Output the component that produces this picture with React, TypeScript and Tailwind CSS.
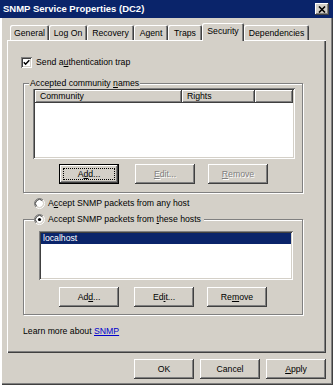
import type { ReactNode } from "react";

const raised =
  "shadow-[inset_-1px_-1px_0_#404040,inset_1px_1px_0_#ffffff,inset_-2px_-2px_0_#808080,inset_2px_2px_0_#d4d0c8]";
const defaultBtn =
  "shadow-[inset_0_0_0_1px_#000000,inset_-2px_-2px_0_#404040,inset_2px_2px_0_#ffffff,inset_-3px_-3px_0_#808080]";
const sunken =
  "shadow-[inset_1px_1px_0_#808080,inset_-1px_-1px_0_#ffffff,inset_2px_2px_0_#404040,inset_-2px_-2px_0_#d4d0c8]";
const etched = "border border-[#808080] shadow-[inset_1px_1px_0_#ffffff,1px_1px_0_#ffffff]";

function Btn({
  children,
  disabled,
  focused,
  className = "",
}: {
  children: ReactNode;
  disabled?: boolean;
  focused?: boolean;
  className?: string;
}) {
  return (
    <div
      className={`relative flex h-[20px] w-[60px] shrink-0 items-center justify-center bg-[#d4d0c8] ${
        focused ? defaultBtn : raised
      } ${disabled ? "text-[#808080] [text-shadow:1px_1px_0_#ffffff]" : "text-black"} ${className}`}
    >
      {focused && <div className="absolute inset-[4px] border border-dotted border-black" />}
      <span className="leading-[11px]">{children}</span>
    </div>
  );
}

function Radio({ checked }: { checked?: boolean }) {
  return (
    <svg width="11" height="11" viewBox="0 0 11 11" className="shrink-0">
      <circle cx="5.5" cy="5.5" r="4" fill="#ffffff" />
      <path d="M1.96 9.04 A5 5 0 0 1 9.04 1.96" fill="none" stroke="#808080" />
      <path d="M9.04 1.96 A5 5 0 0 1 1.96 9.04" fill="none" stroke="#ffffff" />
      <path d="M2.67 8.33 A4 4 0 0 1 8.33 2.67" fill="none" stroke="#404040" />
      <path d="M8.33 2.67 A4 4 0 0 1 2.67 8.33" fill="none" stroke="#d4d0c8" />
      {checked && <circle cx="5.5" cy="5.5" r="1.6" fill="#000000" />}
    </svg>
  );
}

const tabs = [
  { label: "General", w: "w-[39px]" },
  { label: "Log On", w: "w-[38px]" },
  { label: "Recovery", w: "w-[47px]" },
  { label: "Agent", w: "w-[34px]" },
  { label: "Traps", w: "w-[34px]" },
  { label: "Security", w: "w-[42px]", active: true },
  { label: "Dependencies", w: "w-[65px]" },
];

export default function App() {
  return (
    <div className="flex h-[385px] w-[333px] flex-col bg-[#d4d0c8] font-['Liberation_Sans',Arial,sans-serif] text-[8.7px] text-black">
      {/* title bar */}
      <div className="flex h-[18px] shrink-0 items-center justify-between bg-[#0a246a] pl-[3px] pr-[4px]">
        <span className="text-[9.5px] font-bold leading-[12px] text-white">SNMP Service Properties (DC2)</span>
        <div className={`flex h-[12px] w-[14px] items-center justify-center bg-[#d4d0c8] ${raised}`}>
          <svg width="8" height="7" viewBox="0 0 8 7">
            <path d="M1 0.5 L7 6.5 M7 0.5 L1 6.5" stroke="#000000" strokeWidth="1.6" />
          </svg>
        </div>
      </div>

      {/* body */}
      <div className="flex flex-1 flex-col px-[7px] pt-[5px] shadow-[inset_2px_0_0_#ffffff,inset_-1px_-1px_0_#404040,inset_-2px_-2px_0_#808080]">
        {/* tabs */}
        <div className="flex h-[17px] items-end pl-[3px]">
          {tabs.map((t) =>
            t.active ? (
              <div
                key={t.label}
                className={`relative z-10 -mb-[1px] flex h-[18px] ${t.w} items-start justify-center rounded-t-[2px] bg-[#d4d0c8] pt-[3px] leading-[11px] shadow-[inset_1px_1px_0_#ffffff,inset_-1px_0_0_#404040,inset_-2px_0_0_#808080]`}
              >
                {t.label}
              </div>
            ) : (
              <div
                key={t.label}
                className={`flex h-[15px] ${t.w} items-start justify-center rounded-t-[2px] pt-[3px] leading-[11px] shadow-[inset_1px_1px_0_#ffffff,inset_-1px_0_0_#404040,inset_-2px_0_0_#808080]`}
              >
                {t.label}
              </div>
            ),
          )}
        </div>

        {/* tab panel */}
        <div className="flex h-[313px] flex-col shadow-[inset_1px_1px_0_#ffffff,inset_-1px_-1px_0_#404040,inset_-2px_-2px_0_#808080]">
          <div className="ml-[14px] mt-[17px] flex h-[11px] items-center gap-[4px]">
            <div className={`flex h-[11px] w-[11px] items-center justify-center bg-white ${sunken}`}>
              <svg width="7" height="7" viewBox="0 0 7 7">
                <path d="M0.8 3.2 L2.6 5.2 L6.3 1.2" fill="none" stroke="#000000" strokeWidth="1.5" />
              </svg>
            </div>
            <span className="leading-[11px]">
              Send a<u>u</u>thentication trap
            </span>
          </div>

          {/* accepted community names */}
          <div className={`relative ml-[16px] mt-[15px] h-[110px] w-[280px] ${etched}`}>
            <span className="absolute -top-[7px] left-[5px] bg-[#d4d0c8] px-[1px] leading-[12px]">
              Accepted community <u>n</u>ames
            </span>
            <div className={`ml-[9px] mt-[4px] flex h-[71px] w-[262px] flex-col bg-white p-[2px] ${sunken}`}>
              <div className="flex h-[13px] bg-[#d4d0c8]">
                <div className={`flex w-[147px] items-center pl-[5px] leading-[11px] ${raised}`}>Community</div>
                <div className={`flex w-[73px] items-center pl-[5px] leading-[11px] ${raised}`}>Rights</div>
                <div className={`flex-1 ${raised}`} />
              </div>
            </div>
            <div className="ml-[35px] mt-[5px] flex">
              <Btn focused>
                A<u>d</u>d...
              </Btn>
              <Btn disabled className="ml-[16px]">
                <u>E</u>dit...
              </Btn>
              <Btn disabled className="ml-[13px]">
                <u>R</u>emove
              </Btn>
            </div>
          </div>

          <div className="ml-[27px] mt-[4px] flex h-[12px] items-center gap-[3px]">
            <Radio />
            <span className="leading-[11px]">
              A<u>c</u>cept SNMP packets from any host
            </span>
          </div>

          {/* accept from these hosts */}
          <div className={`relative ml-[16px] mt-[10px] h-[96px] w-[280px] ${etched}`}>
            <div className="absolute -top-[7px] left-[10px] flex h-[12px] items-center gap-[3px] bg-[#d4d0c8] pr-[3px]">
              <Radio checked />
              <span className="leading-[11px]">
                Accept SNMP packets from <u>t</u>hese hosts
              </span>
            </div>
            <div className={`ml-[15px] mt-[11px] h-[49px] w-[254px] bg-white p-[2px] ${sunken}`}>
              <div className="h-[11px] bg-[#0a246a] pl-[2px] leading-[11px] text-white">localhost</div>
            </div>
            <div className="ml-[35px] mt-[7px] flex">
              <Btn>
                Ad<u>d</u>...
              </Btn>
              <Btn className="ml-[15px]">
                Ed<u>i</u>t...
              </Btn>
              <Btn className="ml-[13px]">
                Re<u>m</u>ove
              </Btn>
            </div>
          </div>

          <div className="ml-[16px] mt-[10px] leading-[12px]">
            Learn more about <span className="text-[#0000cc] underline">SNMP</span>
          </div>
        </div>

        {/* dialog buttons */}
        <div className="mt-[6px] flex justify-end gap-[6px]">
          <Btn>OK</Btn>
          <Btn>Cancel</Btn>
          <Btn>
            <u>A</u>pply
          </Btn>
        </div>
      </div>
    </div>
  );
}
